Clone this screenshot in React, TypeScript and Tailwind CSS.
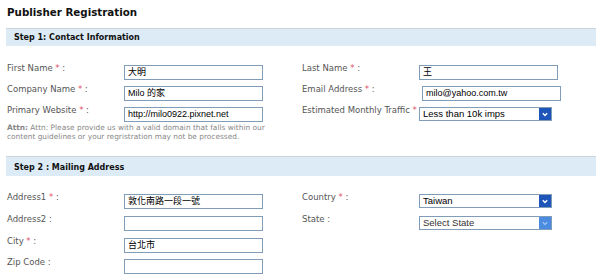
import React from "react";

const font = { fontFamily: '"DejaVu Sans", Verdana, sans-serif' };

function Star() {
  return <span className="text-[#e0506a]"> *</span>;
}

function Label({ text, req }: { text: string; req?: boolean }) {
  return (
    <div className="w-[117px] shrink-0 whitespace-nowrap text-[8.5px] leading-[12px] text-[#555]">
      {text}
      {req && <Star />} :
    </div>
  );
}

function Input({ value = "", cls = "" }: { value?: string; cls?: string }) {
  return (
    <div
      className={`w-[139px] h-[15px] border border-[#7f9db9] bg-white pl-[3px] text-[9px] leading-[13px] text-black mt-[3px] ${cls}`}
      style={{ fontFamily: '"Liberation Sans", "Noto Sans CJK TC", Arial, sans-serif' }}
    >
      {value}
    </div>
  );
}

function Select({ value, disabled }: { value: string; disabled?: boolean }) {
  return (
    <div
      className="relative w-[133px] h-[14px] border border-[#7f9db9] bg-white flex mt-[3px]"
      style={{ fontFamily: '"Liberation Sans", Arial, sans-serif' }}
    >
      <div className={`flex-1 pl-[3px] text-[9.5px] leading-[12px] ${disabled ? "text-[#333]" : "text-black"}`}>{value}</div>
      <div className={`w-[12px] h-full flex items-center justify-center ${disabled ? "bg-[#4b8be0]" : "bg-[#1d55b8]"}`}>
        <svg width="6" height="5" viewBox="0 0 6 5">
          <path d="M0.8 1.2 L3 3.4 L5.2 1.2" stroke={disabled ? "#9cc0f0" : "white"} strokeWidth="1.4" fill="none" />
        </svg>
      </div>
    </div>
  );
}

export default function App() {
  return (
    <div className="w-[600px] h-[280px] bg-white overflow-hidden" style={font}>
      <div className="pl-[7px] pt-[4px] h-[28px] text-[10.3px] font-bold text-[#111] leading-[16px]">Publisher Registration</div>
      <div className="ml-[6px] mr-[4px] h-[18px] bg-[#dcebf5] border-t border-[#c9d6df] pl-[8px] text-[8px] font-bold text-[#111] flex items-center">
        Step 1: Contact Information
      </div>
      <div className="h-[16px]" />
      <div className="pl-[7px] flex h-[21px]">
        <Label text="First Name" req />
        <Input value="大明" />
        <div className="w-[39px]" />
        <Label text="Last Name" req />
        <Input value="王" />
      </div>
      <div className="pl-[7px] flex h-[21px]">
        <Label text="Company Name" req />
        <Input value="Milo 的家" />
        <div className="w-[39px]" />
        <Label text="Email Address" req />
        <Input value="milo@yahoo.com.tw" cls="ml-[3px]" />
      </div>
      <div className="pl-[7px] flex h-[19px]">
        <Label text="Primary Website" req />
        <Input value="http://milo0922.pixnet.net" />
        <div className="w-[39px]" />
        <Label text="Estimated Monthly Traffic" req />
        <Select value="Less than 10k imps" />
      </div>
      <div className="pl-[7px] w-[285px] text-[7.4px] leading-[9px] text-[#888] h-[33px]">
        <b>Attn:</b> Attn: Please provide us with a valid domain that falls within our content guidelines or your regristration may not be processed.
      </div>
      <div className="ml-[6px] mr-[4px] h-[20px] bg-[#dcebf5] border-t border-[#c9d6df] pl-[8px] pt-[2px] text-[8px] font-bold text-[#111] flex items-center">
        Step 2 : Mailing Address
      </div>
      <div className="h-[15px]" />
      <div className="pl-[7px] flex h-[22px]">
        <Label text="Address1" req />
        <Input value="敦化南路一段一號" />
        <div className="w-[39px]" />
        <Label text="Country" req />
        <Select value="Taiwan" />
      </div>
      <div className="pl-[7px] flex h-[22px]">
        <Label text="Address2" />
        <Input />
        <div className="w-[39px]" />
        <Label text="State" />
        <Select value="Select State" disabled />
      </div>
      <div className="pl-[7px] flex h-[21px]">
        <Label text="City" req />
        <Input value="台北市" />
      </div>
      <div className="pl-[7px] flex h-[21px]">
        <Label text="Zip Code" />
        <Input />
      </div>
    </div>
  );
}
